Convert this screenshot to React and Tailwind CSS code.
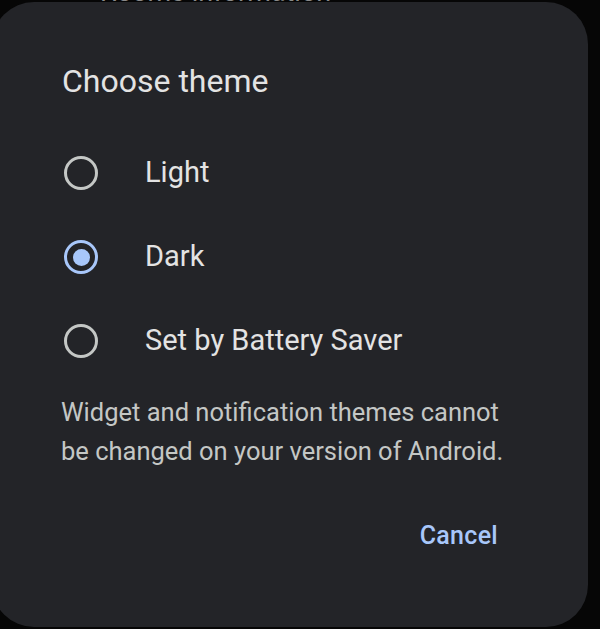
export default function App() {
    const options = [
        { id: 'light', label: 'Light' },
        { id: 'dark', label: 'Dark' },
        { id: 'battery', label: 'Set by Battery Saver' },
    ];
    const selected = 'dark';

    return (
        <div className="w-[600px] h-[629px] bg-[#060606] overflow-hidden relative" style={{ fontFamily: 'Roboto, "Noto Sans", sans-serif' }}>
            {/* text of the page behind the dialog, mostly hidden */}
            <div className="absolute top-[-20px] left-[100px] text-[27px] text-[#8a8a8a] leading-[24px]">
                Rooms information
            </div>
            <div className="relative ml-[-8px] mt-[2px] w-[596px] h-[625px] rounded-[42px] bg-[#232428] pl-[70px] pr-[62px] pt-[59px]">
                <h1 className="text-[32px] leading-[40px] text-[#e3e3e3]">Choose theme</h1>
                <div className="mt-[30px] flex flex-col">
                    {options.map((opt) => (
                        <div key={opt.id} className="h-[84px] flex items-center">
                            <div className="w-[34px] h-[34px] ml-[2px] flex items-center justify-center">
                                {selected === opt.id ? (
                                    <div className="w-[34px] h-[34px] rounded-full border-[3px] border-[#a8c7fa] flex items-center justify-center">
                                        <div className="w-[17px] h-[17px] rounded-full bg-[#a8c7fa]" />
                                    </div>
                                ) : (
                                    <div className="w-[34px] h-[34px] rounded-full border-[3px] border-[#c4c7c5]" />
                                )}
                            </div>
                            <span className="ml-[47px] text-[29px] text-[#e3e3e3]">{opt.label}</span>
                        </div>
                    ))}
                </div>
                <p className="mt-[10px] ml-[-1px] text-[25.5px] leading-[39px] text-[#c4c7c5]">
                    Widget and notification themes cannot<br />be changed on your version of Android.
                </p>
                <div className="flex justify-end mt-[41px] mr-[4px]">
                    <button className="px-[24px] h-[48px] text-[25px] font-medium text-[#a8c7fa] tracking-[0.3px]">
                        Cancel
                    </button>
                </div>
            </div>
        </div>
    );
}
